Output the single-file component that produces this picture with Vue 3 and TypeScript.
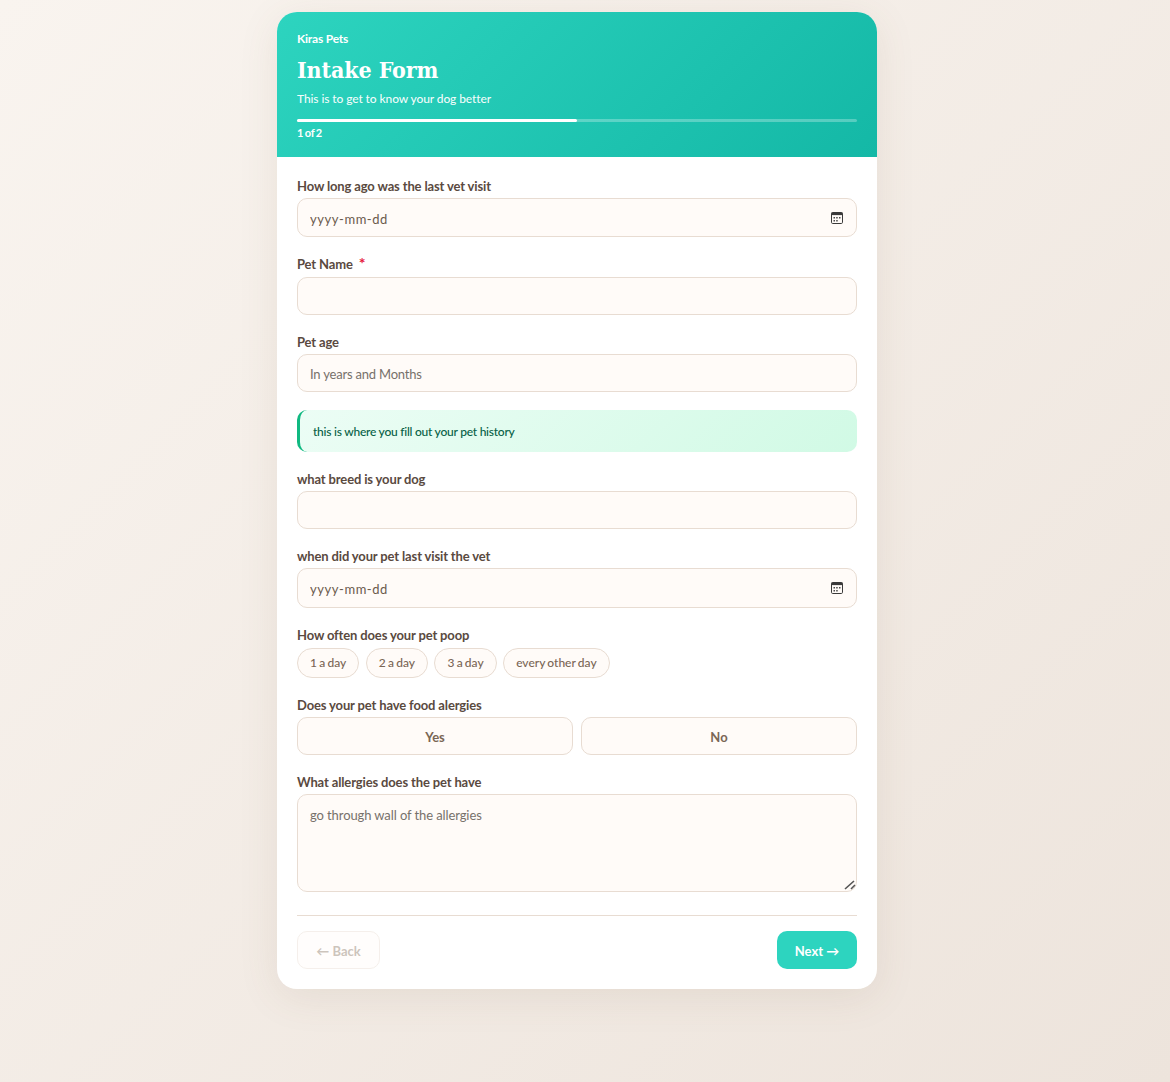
<script setup lang="ts">
const pills: string[] = ['1 a day', '2 a day', '3 a day', 'every other day']
</script>

<template>
  <main class="page">
    <form class="card" @submit.prevent>
      <header class="head">
        <div class="brand">Kiras Pets</div>
        <h1 class="title">Intake Form</h1>
        <p class="sub">This is to get to know your dog better</p>
        <div class="track"><div class="fill"></div></div>
        <div class="step">1 of 2</div>
      </header>
      <div class="body">
        <div class="field">
          <label class="label">How long ago was the last vet visit</label>
          <div class="date-wrap">
            <input class="input date" type="text" placeholder="yyyy-mm-dd" />
            <svg class="cal" viewBox="0 0 12 12" width="12" height="12" aria-hidden="true">
              <rect x="0.5" y="0.5" width="11" height="11" rx="1.2" fill="none" stroke="#3a3a3a" />
              <rect x="0.5" y="0.5" width="11" height="2.6" fill="#3a3a3a" />
              <path d="M2.5 5h1.5v1.5H2.5zM5.2 5h1.5v1.5H5.2zM8 5h1.5v1.5H8zM2.5 8h1.5v1.5H2.5zM5.2 8h1.5v1.5H5.2z" fill="#4a4a4a" />
            </svg>
          </div>
        </div>
        <div class="field">
          <label class="label label-req">Pet Name <span class="req">*</span></label>
          <input class="input" type="text" />
        </div>
        <div class="field">
          <label class="label">Pet age</label>
          <input class="input" type="text" placeholder="In years and Months" />
        </div>
        <div class="note">this is where you fill out your pet history</div>
        <div class="field">
          <label class="label">what breed is your dog</label>
          <input class="input" type="text" />
        </div>
        <div class="field">
          <label class="label">when did your pet last visit the vet</label>
          <div class="date-wrap">
            <input class="input date date-tall" type="text" placeholder="yyyy-mm-dd" />
            <svg class="cal" viewBox="0 0 12 12" width="12" height="12" aria-hidden="true">
              <rect x="0.5" y="0.5" width="11" height="11" rx="1.2" fill="none" stroke="#3a3a3a" />
              <rect x="0.5" y="0.5" width="11" height="2.6" fill="#3a3a3a" />
              <path d="M2.5 5h1.5v1.5H2.5zM5.2 5h1.5v1.5H5.2zM8 5h1.5v1.5H8zM2.5 8h1.5v1.5H2.5zM5.2 8h1.5v1.5H5.2z" fill="#4a4a4a" />
            </svg>
          </div>
        </div>
        <div class="field">
          <label class="label label-req">How often does your pet poop</label>
          <div class="pills">
            <button v-for="p in pills" :key="p" type="button" class="pill">{{ p }}</button>
          </div>
        </div>
        <div class="field">
          <label class="label">Does your pet have food alergies</label>
          <div class="yesno">
            <button type="button" class="choice">Yes</button>
            <button type="button" class="choice">No</button>
          </div>
        </div>
        <div class="field">
          <label class="label">What allergies does the pet have</label>
          <textarea class="input area" placeholder="go through wall of the allergies"></textarea>
        </div>
        <div class="actions">
          <button type="button" class="btn back" disabled>← Back</button>
          <button type="button" class="btn next">Next →</button>
        </div>
      </div>
    </form>
  </main>
</template>

<style>
html, body { margin: 0; padding: 0; }
</style>

<style scoped>
* { box-sizing: border-box; }
.page {
  min-height: 1082px;
  background: linear-gradient(135deg, #f9f4ef 0%, #ede4dc 100%);
  padding: 12px 293px 93px 277px;
  font-family: Lato, "Open Sans", sans-serif;
}
.card {
  width: 600px;
  background: #fff;
  border-radius: 20px;
  overflow: hidden;
  box-shadow: 0 8px 40px rgba(120, 90, 60, 0.1);
}
.head {
  height: 145px;
  padding: 19px 20px 0;
  color: #fff;
  background: linear-gradient(135deg, #2dd4bf 0%, #14b8a6 100%);
}
.brand { font-size: 12px; font-weight: 700; line-height: 15px; margin-bottom: 9px; letter-spacing: -0.2px; }
.title {
  margin: 0;
  font-family: "DejaVu Serif", "Liberation Serif", serif;
  font-stretch: condensed;
  font-size: 23px;
  font-weight: 700;
  line-height: 30px;
  letter-spacing: -0.1px;
}
.sub { margin: 6px 0 0; font-size: 12px; font-weight: 500; line-height: 16px; letter-spacing: -0.1px; color: rgba(255,255,255,.95); }
.track { height: 3px; margin-top: 12px; background: rgba(255,255,255,.28); border-radius: 2px; }
.fill { height: 3px; width: 50%; background: #fff; border-radius: 2px; }
.step { margin-top: 3px; font-size: 11px; font-weight: 700; line-height: 15px; letter-spacing: -0.2px; word-spacing: -1px; }
.body { padding: 20px 20px 20px; }
.field { margin-bottom: 18px; }
.label {
  display: block;
  padding-top: 1px;
  color: #5a4a3f;
  font-size: 13px;
  font-weight: 700;
  line-height: 17px;
  letter-spacing: -0.14px;
  margin-bottom: 3px;
}
.label-req { margin-bottom: 4px; }
.req { color: #e6193c; margin-left: 3px; font-size: 16px; line-height: 14px; }
.date-wrap { position: relative; }
.cal { position: absolute; right: 14.5px; top: 50%; transform: translateY(-50%); }
.input {
  display: block;
  width: 100%;
  height: 38px;
  padding: 1px 12px 0;
  background: #fffbf8;
  border: 1px solid #e8dcd2;
  border-radius: 10px;
  color: #5a4a3f;
  font-family: inherit;
  font-size: 13px;
  letter-spacing: -0.2px;
  outline: none;
}
.input::placeholder { color: #77716b; opacity: 1; }
.date { height: 39px; padding-top: 2px; letter-spacing: 0.55px; }
.date::placeholder { color: #6b5a4c; }
.date-tall { height: 40px; }
.area { height: 98px; padding: 12px; resize: vertical; letter-spacing: -0.1px; }
.area::-webkit-resizer {
  background: url("data:image/svg+xml,%3Csvg xmlns='http://www.w3.org/2000/svg' width='15' height='15'%3E%3Cpath d='M4 13L13 5M10 13L14 9' stroke='%23555' stroke-width='1.6' fill='none'/%3E%3C/svg%3E") no-repeat;
}
.note {
  height: 42px;
  margin-bottom: 18px;
  padding: 0 14px 0 13px;
  display: flex;
  align-items: center;
  background: linear-gradient(135deg, #ecfdf5, #d1fae5);
  border-left: 3px solid #10b981;
  border-radius: 10px;
  color: #065f46;
  font-size: 12px;
  font-weight: 500;
  letter-spacing: -0.24px;
}
.pills { display: flex; gap: 6.5px; }
.pill {
  height: 30px;
  padding: 0 12px 1px;
  border: 1px solid #e8dcd2;
  border-radius: 15px;
  background: #fffbf8;
  color: #7a6655;
  font-family: inherit;
  font-size: 12px;
  font-weight: 500;
  word-spacing: -0.8px;
}
.yesno { display: grid; grid-template-columns: 1fr 1fr; gap: 8px; }
.choice {
  height: 38px;
  padding-top: 2px;
  border: 1px solid #e8dcd2;
  border-radius: 10px;
  background: #fffbf8;
  color: #7a6655;
  font-family: inherit;
  font-size: 13px;
  font-weight: 700;
}
.actions {
  display: flex;
  justify-content: space-between;
  margin-top: 23px;
  padding-top: 15px;
  border-top: 1px solid #e8dcd2;
}
.btn {
  height: 38px;
  padding-top: 2px;
  border-radius: 10px;
  font-family: inherit;
  font-size: 13px;
  font-weight: 700;
}
.back {
  width: 83px;
  background: #fffbf8;
  border: 1px solid #e8dcd2;
  color: #8f7c6a;
  opacity: .45;
}
.next {
  width: 80px;
  background: #2dd4bf;
  border: none;
  color: #fff;
}
</style>
